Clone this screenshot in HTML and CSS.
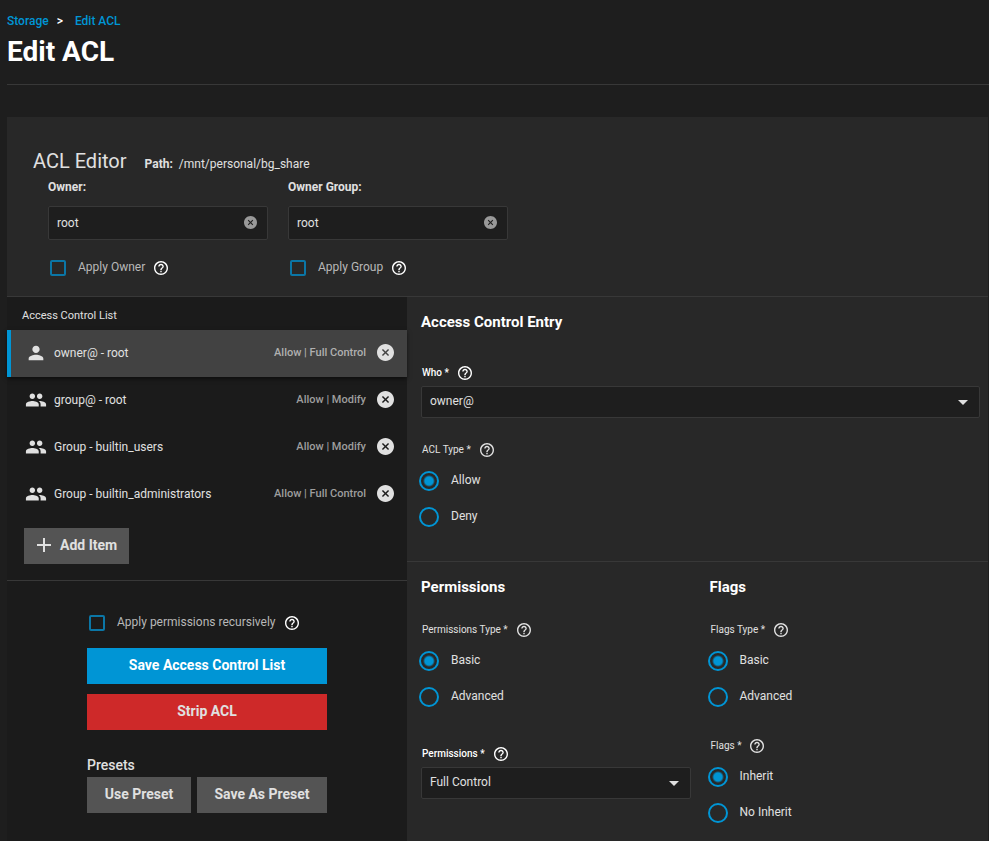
FILE: index.html
```html
<!DOCTYPE html>
<html lang="en">
<head>
<meta charset="utf-8">
<meta name="viewport" content="width=device-width, initial-scale=1">
<title>Edit ACL</title>
<link rel="stylesheet" href="styles.css">
</head>
<body>
<svg class="sprite" aria-hidden="true">
  <symbol id="help" viewBox="2 2 20 20"><path d="M11 18h2v-2h-2v2zm1-16C6.48 2 2 6.48 2 12s4.480 10 10 10 10-4.480 10-10S17.520 2 12 2zm0 18c-4.410 0-8-3.590-8-8s3.590-8 8-8 8 3.590 8 8-3.590 8-8 8zm0-14c-2.210 0-4 1.790-4 4h2c0-1.100.900-2 2-2s2 .900 2 2c0 2-3 1.750-3 5h2c0-2.250 3-2.500 3-5 0-2.210-1.790-4-4-4z"/></symbol>
  <symbol id="clear" viewBox="2 2 20 20"><path d="M12 2C6.470 2 2 6.470 2 12s4.470 10 10 10 10-4.470 10-10S17.530 2 12 2zm4.200 13L15 16.200 12 13.200 9 16.200 7.800 15 10.800 12 7.800 9 9 7.800 12 10.800 15 7.800 16.200 9 13.200 12z"/></symbol>
  <symbol id="person" viewBox="0 0 24 24"><path d="M12 12c2.210 0 4-1.790 4-4s-1.790-4-4-4-4 1.790-4 4 1.790 4 4 4zm0 2c-2.670 0-8 1.340-8 4v2h16v-2c0-2.660-5.330-4-8-4z"/></symbol>
  <symbol id="people" viewBox="0 0 24 24"><path d="M16 11c1.660 0 2.990-1.340 2.990-3S17.660 5 16 5c-1.660 0-3 1.340-3 3s1.340 3 3 3zm-8 0c1.660 0 2.990-1.340 2.990-3S9.660 5 8 5C6.340 5 5 6.340 5 8s1.340 3 3 3zm0 2c-2.330 0-7 1.170-7 3.500V19h14v-2.500c0-2.330-4.670-3.500-7-3.500zm8 0c-.29 0-.62.020-.97.050 1.160.840 1.970 1.970 1.970 3.450V19h6v-2.500c0-2.330-4.670-3.500-7-3.500z"/></symbol>
  <symbol id="plus" viewBox="0 0 16 16"><path d="M7 1h2v6h6v2H9v6H7V9H1V7h6z"/></symbol>
</svg>

<header class="page-header">
  <nav class="breadcrumb" aria-label="Breadcrumb">
    <a href="#">Storage</a><span>&gt;</span><a href="#">Edit ACL</a>
  </nav>
  <h1>Edit ACL</h1>
</header>

<main class="card">
  <section class="editor-head">
    <div class="editor-title">
      <h2>ACL Editor</h2>
      <p><strong>Path:</strong> <span>/mnt/personal/bg_share</span></p>
    </div>
    <div class="owners">
      <div class="owner">
        <label class="owner-label" for="owner">Owner:</label>
        <div class="text-field">
          <input id="owner" type="text" value="root">
          <button class="icon-button" type="button" aria-label="Clear owner"><svg><use href="#clear"/></svg></button>
        </div>
        <div class="check-row">
          <input type="checkbox" id="apply-owner"><label for="apply-owner">Apply Owner</label><svg class="help"><use href="#help"/></svg>
        </div>
      </div>
      <div class="owner">
        <label class="owner-label" for="owner-group">Owner Group:</label>
        <div class="text-field">
          <input id="owner-group" type="text" value="root">
          <button class="icon-button" type="button" aria-label="Clear owner group"><svg><use href="#clear"/></svg></button>
        </div>
        <div class="check-row">
          <input type="checkbox" id="apply-group"><label for="apply-group">Apply Group</label><svg class="help"><use href="#help"/></svg>
        </div>
      </div>
    </div>
  </section>

  <div class="columns">
    <aside class="side">
      <section class="acl">
        <h3 class="list-title">Access Control List</h3>
        <ul class="acl-list">
          <li class="selected"><svg class="who"><use href="#person"/></svg><span class="name">owner@ - root</span><span class="perm">Allow | Full Control</span><button class="icon-button" type="button" aria-label="Remove entry"><svg><use href="#clear"/></svg></button></li>
          <li><svg class="who"><use href="#people"/></svg><span class="name">group@ - root</span><span class="perm">Allow | Modify</span><button class="icon-button" type="button" aria-label="Remove entry"><svg><use href="#clear"/></svg></button></li>
          <li><svg class="who"><use href="#people"/></svg><span class="name">Group - builtin_users</span><span class="perm">Allow | Modify</span><button class="icon-button" type="button" aria-label="Remove entry"><svg><use href="#clear"/></svg></button></li>
          <li><svg class="who"><use href="#people"/></svg><span class="name">Group - builtin_administrators</span><span class="perm">Allow | Full Control</span><button class="icon-button" type="button" aria-label="Remove entry"><svg><use href="#clear"/></svg></button></li>
        </ul>
        <button class="button add" type="button"><svg><use href="#plus"/></svg>Add Item</button>
      </section>
      <section class="actions">
        <div class="check-row">
          <input type="checkbox" id="recursive"><label for="recursive">Apply permissions recursively</label><svg class="help"><use href="#help"/></svg>
        </div>
        <button class="button primary" type="button">Save Access Control List</button>
        <button class="button danger" type="button">Strip ACL</button>
        <h3>Presets</h3>
        <div class="presets">
          <button class="button" type="button">Use Preset</button>
          <button class="button" type="button">Save As Preset</button>
        </div>
      </section>
    </aside>

    <form class="entry">
      <section class="panel entry-panel">
        <h3>Access Control Entry</h3>
        <div class="field">
          <div class="caption strong"><label for="who">Who *</label><svg class="help"><use href="#help"/></svg></div>
          <div class="select"><select id="who"><option>owner@</option></select></div>
        </div>
        <fieldset class="field">
          <legend class="caption"><span>ACL Type *</span><svg class="help"><use href="#help"/></svg></legend>
          <label class="radio"><input type="radio" name="acl-type" checked><span>Allow</span></label>
          <label class="radio"><input type="radio" name="acl-type"><span>Deny</span></label>
        </fieldset>
      </section>
      <div class="split">
        <section class="panel">
          <h3>Permissions</h3>
          <fieldset class="field">
            <legend class="caption"><span>Permissions Type *</span><svg class="help"><use href="#help"/></svg></legend>
            <label class="radio"><input type="radio" name="perm-type" checked><span>Basic</span></label>
            <label class="radio"><input type="radio" name="perm-type"><span>Advanced</span></label>
          </fieldset>
          <div class="field">
            <div class="caption strong"><label for="perms">Permissions *</label><svg class="help"><use href="#help"/></svg></div>
            <div class="select"><select id="perms"><option>Full Control</option></select></div>
          </div>
        </section>
        <section class="panel">
          <h3>Flags</h3>
          <fieldset class="field">
            <legend class="caption"><span>Flags Type *</span><svg class="help"><use href="#help"/></svg></legend>
            <label class="radio"><input type="radio" name="flags-type" checked><span>Basic</span></label>
            <label class="radio"><input type="radio" name="flags-type"><span>Advanced</span></label>
          </fieldset>
          <fieldset class="field">
            <legend class="caption"><span>Flags *</span><svg class="help"><use href="#help"/></svg></legend>
            <label class="radio"><input type="radio" name="flags" checked><span>Inherit</span></label>
            <label class="radio"><input type="radio" name="flags"><span>No Inherit</span></label>
          </fieldset>
        </section>
      </div>
    </form>
  </div>
</main>
</body>
</html>
```
FILE: styles.css
```css
:root {
  --bg: #1e1e1e;
  --card: #282828;
  --side: #1b1b1b;
  --line: #383838;
  --blue: #0095d5;
  --red: #ce2929;
  --grey: #545454;
  --text: #e0e0e0;
}

* { box-sizing: border-box; }

body {
  margin: 0;
  min-height: 100vh;
  padding: 0 1px 1px 7px;
  display: flex;
  flex-direction: column;
  background: var(--bg);
  color: var(--text);
  font: 12px/16px Roboto, "Liberation Sans", sans-serif;
}

h1, h2, h3, p, ul, fieldset { margin: 0; padding: 0; }
ul { list-style: none; }
fieldset { border: 0; min-width: 0; }
input, select, button { font: inherit; color: inherit; margin: 0; }
svg { fill: currentColor; flex: none; display: block; }
.sprite { position: absolute; width: 0; height: 0; }

.page-header {
  padding-top: 13px;
  margin: 0 -1px 32px 0;
  border-bottom: 1px solid var(--line);
}
.breadcrumb { display: flex; font-weight: 500; }
.breadcrumb span { margin: 0 12px 0 8px; color: #fff; }
.breadcrumb a { color: var(--blue); text-decoration: none; }
h1 { padding-bottom: 9px; color: #fff; font-size: 28px; font-weight: 700; line-height: 46px; }

.card { flex: 1; display: flex; flex-direction: column; background: var(--card); }

.editor-head { padding: 32px 26px 20px; border-bottom: 1px solid var(--line); }
.editor-title { display: flex; align-items: baseline; gap: 18px; }
.editor-title h2 { font-size: 20px; font-weight: 400; line-height: 24px; }
.editor-title strong { font-weight: 700; margin-right: 3px; }
.owners { display: flex; gap: 20px; padding: 6px 15px 0; }
.owner { width: 220px; }
.owner-label { display: block; font-weight: 700; }
.text-field {
  display: flex;
  align-items: center;
  height: 34px;
  margin: 11px 0 20px;
  padding: 0 10px 0 8px;
  border: 1px solid var(--line);
  border-radius: 2px;
  background: var(--bg);
}
.text-field input { flex: 1; min-width: 0; padding: 0; border: 0; background: none; outline: 0; }
.icon-button { padding: 0 0 1px; border: 0; background: none; }
.text-field svg { width: 13px; height: 13px; color: #999; }

.check-row { display: flex; align-items: center; height: 16px; padding-left: 2px; color: #b8b8b8; }
.check-row label { padding-bottom: 2px; }
.check-row input {
  appearance: none;
  width: 16px;
  height: 16px;
  margin-right: 12px;
  border: 2px solid #0b76a6;
  border-radius: 2px;
}
.help { width: 14px; height: 14px; margin-left: 9px; color: #fff; }

.columns { flex: 1; display: grid; grid-template-columns: 400px 1fr; }
.side { background: var(--side); }
.acl { padding-bottom: 16px; border-bottom: 1px solid var(--line); }
.list-title { padding: 11px 15px 6px; font-size: 11px; font-weight: 400; }
.acl-list li {
  display: flex;
  align-items: center;
  height: 47px;
  padding: 0 13px 2px 14px;
  border-left: 4px solid transparent;
}
.acl-list .selected {
  border-color: var(--blue);
  background: #424242;
  box-shadow: 0 2px 4px rgba(0, 0, 0, .5);
}
.who { width: 22px; height: 22px; margin-right: 7px; }
.name { flex: 1; }
.perm { margin-right: 11px; color: #9e9e9e; font-size: 11px; font-weight: 500; }
.selected .perm { color: #b0b0b0; }
.acl-list .icon-button svg { width: 17px; height: 17px; }

.button {
  height: 36px;
  border: 0;
  padding: 0 12px 2px;
  background: var(--grey);
  color: var(--text);
  font-size: 14px;
  font-weight: 700;
  white-space: nowrap;
}
.add { display: flex; align-items: center; gap: 8px; margin: 10px 0 0 17px; }
.add svg { width: 16px; height: 16px; }

.actions { width: 240px; margin: 34px auto 28px 80px; display: flex; flex-direction: column; }
.actions .check-row { margin-bottom: 17px; white-space: nowrap; }
.primary { background: var(--blue); color: #fff; margin-bottom: 10px; }
.danger { background: var(--red); }
.actions h3 { margin: 27px 0 4px; font-size: 14px; font-weight: 500; }
.presets { display: grid; grid-template-columns: 104px 1fr; gap: 6px; }
.presets .button { padding: 0 0 2px; }

.panel { padding: 15px 8px 16px 14px; }
.panel h3 { color: #fff; font-size: 15px; line-height: 20px; font-weight: 700; margin-bottom: 25px; }
.entry-panel { border-bottom: 1px solid var(--line); padding-bottom: 26px; }
.entry-panel h3 { margin-bottom: 33px; }
.split { display: grid; grid-template-columns: 1fr 1fr; padding-right: 4px; }
.split .panel { padding-right: 5px; }

.caption { display: flex; align-items: center; height: 16px; padding-left: 1px; font-size: 10px; }
.caption label, .caption span { padding-bottom: 1px; }
.caption .help { color: var(--text); }
.strong, .caption.strong .help { color: #fff; }
.strong { font-weight: 500; margin-bottom: 5px; }
.field + .field { margin-top: 24px; }
fieldset .caption { margin-bottom: 5px; }
.split .field + div.field { margin-top: 31px; }
.split .field + fieldset.field { margin-top: 23px; }

.select { position: relative; }
.select select {
  appearance: none;
  display: block;
  width: 100%;
  height: 32px;
  padding: 0 8px 2px;
  border: 1px solid var(--line);
  border-radius: 2px;
  background: var(--bg);
}
.select::after {
  content: "";
  position: absolute;
  right: 12px;
  top: 14px;
  border: 5px solid transparent;
  border-top-color: var(--text);
  border-bottom: 0;
  pointer-events: none;
}

.radio { display: flex; align-items: center; gap: 12px; height: 36px; margin-left: -2px; }
.radio input {
  appearance: none;
  width: 20px;
  height: 20px;
  border: 2px solid var(--blue);
  border-radius: 50%;
}
.radio input:checked { background: radial-gradient(circle, var(--blue) 4px, transparent 6px); }
.radio span { padding-bottom: 2px; }
```
